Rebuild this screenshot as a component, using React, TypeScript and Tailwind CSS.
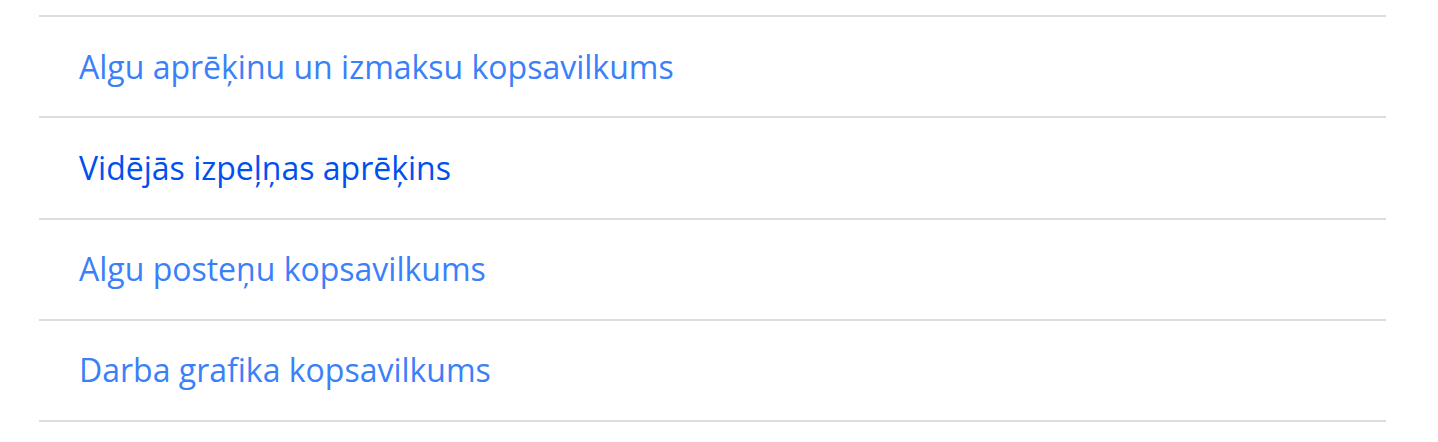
import React from 'react';

const reports = [
  { label: 'Algu aprēķinu un izmaksu kopsavilkums', visited: false },
  { label: 'Vidējās izpeļņas aprēķins', visited: true },
  { label: 'Algu posteņu kopsavilkums', visited: false },
  { label: 'Darba grafika kopsavilkums', visited: false },
];

const App: React.FC = () => {
  return (
    <div className="min-h-screen bg-white pt-[15px] px-[39px] pr-[52px] font-['Open_Sans',sans-serif]">
      <ul className="border-b-2 border-[#dddddd]">
        {reports.map((r) => (
          <li
            key={r.label}
            className="h-[101.25px] border-t-2 border-[#dddddd] flex items-center pl-[40px]"
          >
            <a
              href="#"
              className={`text-[32px] leading-none ${r.visited ? 'text-[#0050ee]' : 'text-[#3a80f8]'}`}
            >
              {r.label}
            </a>
          </li>
        ))}
      </ul>
    </div>
  );
};

export default App;
